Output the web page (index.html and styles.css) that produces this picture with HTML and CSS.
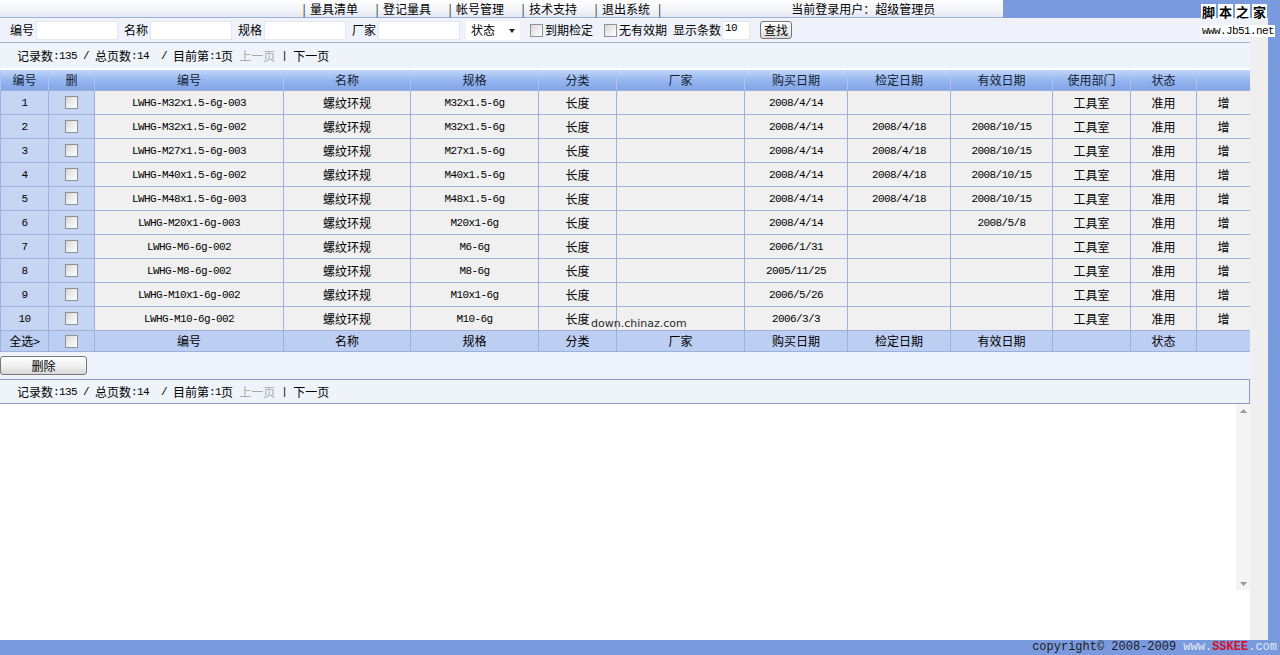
FILE: index.html
```html
<!DOCTYPE html>
<html lang="zh-CN">
<head>
<meta charset="utf-8">
<title>量具管理</title>
<link rel="stylesheet" href="styles.css">
</head>
<body>
<div class="page">
  <header class="top">
    <div class="topbar">
      <nav class="nav">
        <a class="nav-item">量具清单</a>
        <a class="nav-item">登记量具</a>
        <a class="nav-item">帐号管理</a>
        <a class="nav-item">技术支持</a>
        <a class="nav-item last">退出系统</a>
      </nav>
      <div class="user">当前登录用户：超级管理员</div>
    </div>
    <div class="topfill"></div>
  </header>

  <div class="middle">
    <div class="frame">
      <main class="main">
        <form class="filter">
          <label class="field"><span>编号</span><input class="txt w82" type="text"></label>
          <label class="field"><span>名称</span><input class="txt w82" type="text"></label>
          <label class="field"><span>规格</span><input class="txt w82" type="text"></label>
          <label class="field"><span>厂家</span><input class="txt w82" type="text"></label>
          <span class="select"><select><option>状态</option></select></span>
          <label class="check c1"><input class="cb" type="checkbox"><span>到期检定</span></label>
          <label class="check c2"><input class="cb" type="checkbox"><span>无有效期</span></label>
          <label class="field count"><span>显示条数</span><input class="txt w28 a" type="text" value="10"></label>
          <button class="btn find" type="button">查找</button>
        </form>

        <div class="pager">
          <span>记录数</span><span class="a">:135 / </span><span>总页数</span><span class="a">:14&nbsp; / </span><span>目前第</span><span class="a">:1</span><span>页</span><span class="a">&nbsp;</span><span class="off">上一页</span><span class="a">&nbsp;|&nbsp;</span><span>下一页</span>
        </div>

        <table class="grid">
          <colgroup>
            <col style="width:48px"><col style="width:46px"><col style="width:189px"><col style="width:127px"><col style="width:128px"><col style="width:78px"><col style="width:128px"><col style="width:103px"><col style="width:103px"><col style="width:102px"><col style="width:78px"><col style="width:66px"><col style="width:54px">
          </colgroup>
          <thead>
            <tr><th>编号</th><th>删</th><th>编号</th><th>名称</th><th>规格</th><th>分类</th><th>厂家</th><th>购买日期</th><th>检定日期</th><th>有效日期</th><th>使用部门</th><th>状态</th><th></th></tr>
          </thead>
          <tbody>
            <tr><td class="k a">1</td><td class="k"><input class="cb" type="checkbox"></td><td class="a">LWHG-M32x1.5-6g-003</td><td>螺纹环规</td><td class="a">M32x1.5-6g</td><td>长度</td><td></td><td class="a">2008/4/14</td><td class="a"></td><td class="a"></td><td>工具室</td><td>准用</td><td>增</td></tr>
            <tr><td class="k a">2</td><td class="k"><input class="cb" type="checkbox"></td><td class="a">LWHG-M32x1.5-6g-002</td><td>螺纹环规</td><td class="a">M32x1.5-6g</td><td>长度</td><td></td><td class="a">2008/4/14</td><td class="a">2008/4/18</td><td class="a">2008/10/15</td><td>工具室</td><td>准用</td><td>增</td></tr>
            <tr><td class="k a">3</td><td class="k"><input class="cb" type="checkbox"></td><td class="a">LWHG-M27x1.5-6g-003</td><td>螺纹环规</td><td class="a">M27x1.5-6g</td><td>长度</td><td></td><td class="a">2008/4/14</td><td class="a">2008/4/18</td><td class="a">2008/10/15</td><td>工具室</td><td>准用</td><td>增</td></tr>
            <tr><td class="k a">4</td><td class="k"><input class="cb" type="checkbox"></td><td class="a">LWHG-M40x1.5-6g-002</td><td>螺纹环规</td><td class="a">M40x1.5-6g</td><td>长度</td><td></td><td class="a">2008/4/14</td><td class="a">2008/4/18</td><td class="a">2008/10/15</td><td>工具室</td><td>准用</td><td>增</td></tr>
            <tr><td class="k a">5</td><td class="k"><input class="cb" type="checkbox"></td><td class="a">LWHG-M48x1.5-6g-003</td><td>螺纹环规</td><td class="a">M48x1.5-6g</td><td>长度</td><td></td><td class="a">2008/4/14</td><td class="a">2008/4/18</td><td class="a">2008/10/15</td><td>工具室</td><td>准用</td><td>增</td></tr>
            <tr><td class="k a">6</td><td class="k"><input class="cb" type="checkbox"></td><td class="a">LWHG-M20x1-6g-003</td><td>螺纹环规</td><td class="a">M20x1-6g</td><td>长度</td><td></td><td class="a">2008/4/14</td><td class="a"></td><td class="a">2008/5/8</td><td>工具室</td><td>准用</td><td>增</td></tr>
            <tr><td class="k a">7</td><td class="k"><input class="cb" type="checkbox"></td><td class="a">LWHG-M6-6g-002</td><td>螺纹环规</td><td class="a">M6-6g</td><td>长度</td><td></td><td class="a">2006/1/31</td><td class="a"></td><td class="a"></td><td>工具室</td><td>准用</td><td>增</td></tr>
            <tr><td class="k a">8</td><td class="k"><input class="cb" type="checkbox"></td><td class="a">LWHG-M8-6g-002</td><td>螺纹环规</td><td class="a">M8-6g</td><td>长度</td><td></td><td class="a">2005/11/25</td><td class="a"></td><td class="a"></td><td>工具室</td><td>准用</td><td>增</td></tr>
            <tr><td class="k a">9</td><td class="k"><input class="cb" type="checkbox"></td><td class="a">LWHG-M10x1-6g-002</td><td>螺纹环规</td><td class="a">M10x1-6g</td><td>长度</td><td></td><td class="a">2006/5/26</td><td class="a"></td><td class="a"></td><td>工具室</td><td>准用</td><td>增</td></tr>
            <tr><td class="k a">10</td><td class="k"><input class="cb" type="checkbox"></td><td class="a">LWHG-M10-6g-002</td><td>螺纹环规</td><td class="a">M10-6g</td><td>长度</td><td></td><td class="a">2006/3/3</td><td class="a"></td><td class="a"></td><td>工具室</td><td>准用</td><td>增</td></tr>
          </tbody>
          <tfoot>
            <tr><td>全选&gt;</td><td><input class="cb" type="checkbox"></td><td>编号</td><td>名称</td><td>规格</td><td>分类</td><td>厂家</td><td>购买日期</td><td>检定日期</td><td>有效日期</td><td></td><td>状态</td><td></td></tr>
          </tfoot>
        </table>

        <div class="toolbar"><button class="btn del" type="button">删除</button></div>

        <div class="pager pager-bottom">
          <span>记录数</span><span class="a">:135 / </span><span>总页数</span><span class="a">:14&nbsp; / </span><span>目前第</span><span class="a">:1</span><span>页</span><span class="a">&nbsp;</span><span class="off">上一页</span><span class="a">&nbsp;|&nbsp;</span><span>下一页</span>
        </div>

        <div class="detail">
          <div class="detail-body"></div>
          <div class="vscroll">
            <svg class="arr" width="7" height="4" viewBox="0 0 7 4"><path d="M0 4 L3.5 0 L7 4Z" fill="#9a9a9a"/></svg>
            <svg class="arr" width="7" height="4" viewBox="0 0 7 4"><path d="M0 0 L3.5 4 L7 0Z" fill="#9a9a9a"/></svg>
          </div>
        </div>
        <div class="rest"></div>
      </main>
      <div class="gutter"></div>
    </div>
    <div class="edge"></div>
  </div>

  <footer class="footer">
    <span class="copy">copyright© 2008-2009 </span><span class="www">www.</span><span class="brand">SSKEE</span><span class="www">.com</span>
  </footer>

  <div class="badge">
    <div class="badge-title"><span>脚</span><span>本</span><span>之</span><span>家</span></div>
    <div class="badge-url">www.Jb51.net</div>
  </div>
  <div class="watermark">down.chinaz.com</div>
</div>
</body>
</html>
```

FILE: styles.css
```css
html, body {
  margin: 0;
  padding: 0;
}
body {
  font-family: "Noto Sans CJK SC", "Liberation Sans", sans-serif;
  font-size: 12px;
  line-height: 14px;
  color: #000;
  background: #7a9ade;
  overflow: hidden;
}
.page {
  position: relative;
  width: 1280px;
  height: 655px;
  display: flex;
  flex-direction: column;
}
.a {
  font-family: "Liberation Mono", monospace;
  font-size: 11px;
  letter-spacing: -0.6px;
}

/* top */
.top {
  display: flex;
  height: 18px;
  flex: none;
}
.topbar {
  width: 1003px;
  box-sizing: border-box;
  background: linear-gradient(#ffffff, #f2f4f9 60%, #e4e9f3);
  border-bottom: 1px solid #9eb0d8;
  display: flex;
  align-items: center;
  padding-left: 298px;
  white-space: nowrap;
}
.topfill {
  flex: 1;
  background: #7a9ade;
}
.nav {
  display: flex;
  align-items: center;
  flex: none;
}
.nav-item {
  display: flex;
  flex: none;
  width: 73px;
  color: #000;
  white-space: nowrap;
}
.nav-item::before {
  content: "|";
  width: 12px;
  text-align: center;
  color: #222;
}
.nav-item.last {
  width: auto;
}
.nav-item.last::after {
  content: "|";
  margin-left: 8px;
  color: #222;
}
.user {
  margin-left: 130px;
}

/* middle */
.middle {
  flex: 1;
  display: flex;
  min-height: 0;
}
.frame {
  width: 1268px;
  display: flex;
  background: #efefef;
}
.gutter {
  flex: 1;
  background: #efefef;
}
.edge {
  flex: 1;
  background: #7a9ade;
}
.main {
  width: 1250px;
  display: flex;
  flex-direction: column;
  background: #fff;
}

/* filter */
.filter {
  margin: 0;
  height: 24px;
  flex: none;
  display: flex;
  align-items: center;
  padding-left: 10px;
  background: #eff2fa;
  border-bottom: 1px solid #aab3c5;
}
.field {
  display: flex;
  align-items: center;
  gap: 2px;
  margin-right: 6px;
}
.txt {
  box-sizing: border-box;
  height: 19px;
  border: 1px solid #e3e7ee;
  background: #fff;
  padding: 0 1px;
  margin: 0;
  outline: none;
}
.w82 { width: 82px; }
.w28 { width: 28px; }
.select {
  position: relative;
  width: 54px;
  height: 19px;
  background: #fff;
  margin-right: 10px;
}
.select select {
  appearance: none;
  -webkit-appearance: none;
  width: 100%;
  height: 100%;
  border: none;
  background: transparent;
  font: inherit;
  padding: 0 0 0 5px;
  margin: 0;
  color: #000;
}
.select::after {
  content: "";
  position: absolute;
  right: 5px;
  top: 8px;
  border-left: 3.5px solid transparent;
  border-right: 3.5px solid transparent;
  border-top: 4px solid #222;
}
.check {
  display: flex;
  align-items: center;
  gap: 2px;
}
.check.c1 { margin-right: 11px; }
.check.c2 { margin-right: 6px; }
.cb {
  appearance: none;
  -webkit-appearance: none;
  width: 13px;
  height: 13px;
  margin: 0;
  box-sizing: border-box;
  border: 1px solid #8f9297;
  background: linear-gradient(135deg, #d8d8d8, #f4f4f4 70%, #ffffff);
  vertical-align: middle;
}
.count {
  gap: 1px;
  margin-right: 10px;
}
.count .txt {
  font-size: 11px;
  padding: 0 0 4px 2px;
}
.btn {
  font-family: inherit;
  font-size: 12px;
  line-height: 14px;
  color: #000;
  border: 1px solid #777;
  border-radius: 3px;
  background: linear-gradient(#ffffff, #f1f1f1 50%, #d8d8d8);
  padding: 0;
  margin: 0;
}
.find {
  width: 32px;
  height: 18px;
}

/* pager */
.pager {
  height: 25px;
  flex: none;
  display: flex;
  align-items: center;
  padding-left: 17px;
  background: #eff3fa;
  white-space: pre;
}
.pager .off {
  color: #a9a9a9;
}

/* table */
.grid {
  margin-top: 2px;
  width: 1250px;
  table-layout: fixed;
  border-collapse: collapse;
  flex: none;
}
.grid th {
  height: 20px;
  padding: 0;
  font-weight: normal;
  color: #141e33;
  background: linear-gradient(#c1d5f8, #93b4ee 55%, #82a5e6);
  border-left: 1px solid #aec4ee;
  border-right: 1px solid #aec4ee;
  border-bottom: 1px solid #9cb0da;
}
.grid td {
  height: 23px;
  padding: 0;
  text-align: center;
  background: #f0f0f0;
  border: 1px solid #9db1da;
}
.grid td.k {
  background: #c6d5f3;
}
.grid td.a {
  font-size: 11px;
}
.grid tfoot td {
  height: 20px;
  background: #bdcef3;
}
.grid .cb {
  display: block;
  margin: 0 auto;
}

/* toolbar */
.toolbar {
  height: 27px;
  flex: none;
  background: #eef3fb;
  display: flex;
  align-items: flex-start;
  padding-top: 4px;
  box-sizing: border-box;
}
.del {
  width: 87px;
  height: 19px;
}
.pager-bottom {
  height: 25px;
  box-sizing: border-box;
  border-top: 1px solid #8a9cc1;
  border-bottom: 1px solid #8a9cc1;
  border-right: 1px solid #8a9cc1;
}

/* detail frame */
.detail {
  height: 186px;
  flex: none;
  display: flex;
  background: #fff;
}
.detail-body {
  flex: 1;
}
.vscroll {
  width: 14px;
  background: #f4f4f4;
  display: flex;
  flex-direction: column;
  justify-content: space-between;
  align-items: center;
  padding: 5px 0 4px;
  box-sizing: border-box;
}
.rest {
  flex: 1;
  background: #fff;
}

/* footer */
.footer {
  height: 15px;
  flex: none;
  background: #7a9ade;
  display: flex;
  justify-content: flex-end;
  align-items: center;
  padding-right: 3px;
  font-family: "Liberation Mono", monospace;
  font-size: 12px;
  line-height: 15px;
  white-space: pre;
}
.copy { color: #1c1c1c; }
.www { color: #e3e9f6; }
.brand {
  color: #d2102c;
  font-weight: bold;
}

/* overlays */
.badge {
  position: absolute;
  left: 1201px;
  top: 4px;
  display: flex;
  flex-direction: column;
  align-items: flex-start;
  gap: 6px;
}
.badge-title {
  display: flex;
  gap: 2px;
}
.badge-title span {
  width: 15px;
  height: 15px;
  background: #fff;
  font-weight: bold;
  font-size: 13px;
  line-height: 15px;
  text-align: center;
  color: #000;
}
.badge-url {
  background: #fff;
  font-family: "Liberation Mono", monospace;
  font-size: 11px;
  letter-spacing: -0.6px;
  line-height: 12px;
  padding: 0 1px;
  color: #000;
}
.watermark {
  position: absolute;
  left: 591px;
  top: 317px;
  font-family: "DejaVu Sans", sans-serif;
  font-size: 11px;
  line-height: 14px;
  color: #2a2a2a;
}
```
